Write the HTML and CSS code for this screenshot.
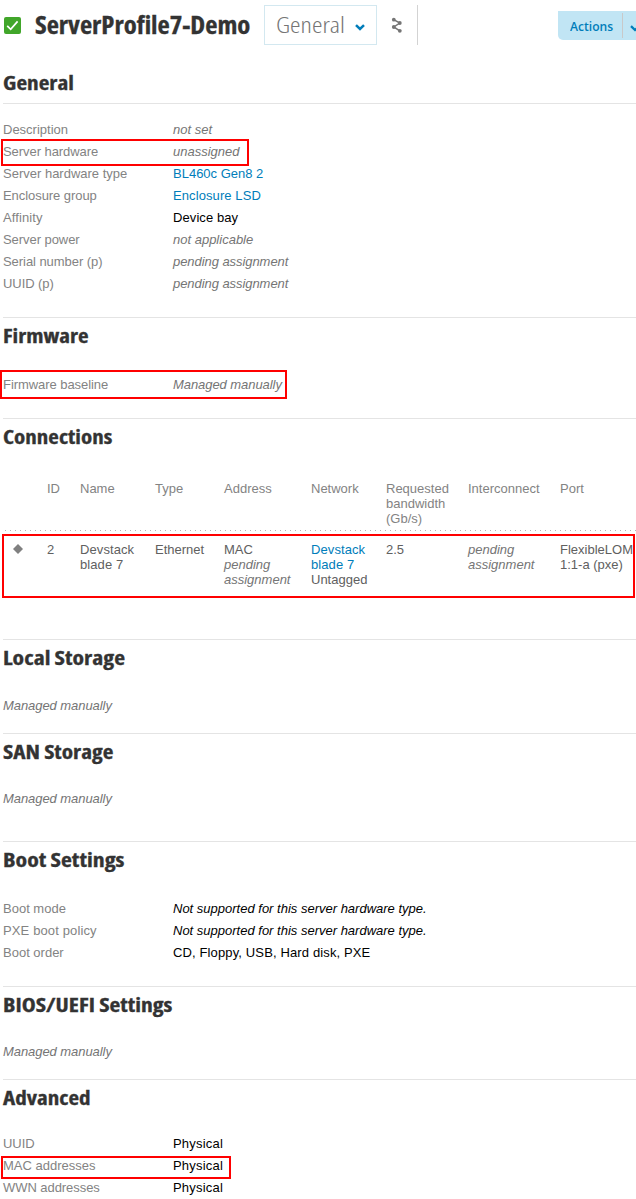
FILE: index.html
```html
<!DOCTYPE html>
<html lang="en">
<head>
<meta charset="utf-8">
<title>ServerProfile7-Demo</title>
<link rel="stylesheet" href="styles.css">
</head>
<body>
<header class="header">
  <svg class="status" viewBox="0 0 17 17"><rect width="17" height="17" rx="2" fill="#41a62a"/><path d="M3.2 8.8 6.7 12.3 13.6 4.4" fill="none" stroke="#fff" stroke-width="1.7"/></svg>
  <h1 class="title"><span class="fit fit-title">ServerProfile7-Demo</span></h1>
  <div class="view"><span class="view-name"><span class="fit fit-view">General</span></span>
    <svg class="chevron" viewBox="0 0 10 7"><path d="M1 1.2 5 5 9 1.2" fill="none" stroke="#007dba" stroke-width="2.5"/></svg>
  </div>
  <div class="share"><svg width="12" height="17" viewBox="0 0 12 17"><path d="M2.8 2.7 8.8 6 2.8 10 8.8 13.8" fill="none" stroke="#757575" stroke-width="1.5"/><g fill="#757575"><circle cx="2.8" cy="2.7" r="1.9"/><circle cx="8.8" cy="6" r="1.9"/><circle cx="2.8" cy="10" r="1.9"/><circle cx="8.8" cy="13.8" r="1.9"/></g></svg></div>
  <div class="actions"><span class="actions-label"><span class="fit fit-actions">Actions</span></span><span class="actions-more"><svg width="10" height="7" viewBox="0 0 10 7"><path d="M1 1.2 5 5 9 1.2" fill="none" stroke="#007dba" stroke-width="2.3"/></svg></span></div>
</header>
<main class="main">
  <section class="section general">
    <h2><span class="fit f-general">General</span></h2>
    <dl class="rows">
      <dt>Description</dt><dd class="unset">not set</dd>
      <dt class="tight">Server hardware</dt><dd class="unset">unassigned</dd>
      <dt>Server hardware type</dt><dd class="link">BL460c Gen8 2</dd>
      <dt class="tight">Enclosure group</dt><dd class="link loose">Enclosure LSD</dd>
      <dt class="loose">Affinity</dt><dd class="loose">Device bay</dd>
      <dt class="tight">Server power</dt><dd class="unset">not applicable</dd>
      <dt class="tight">Serial number (p)</dt><dd class="unset tight">pending assignment</dd>
      <dt class="tight">UUID (p)</dt><dd class="unset tight">pending assignment</dd>
    </dl>
    <div class="mark mark-hardware"></div>
  </section>
  <section class="section firmware">
    <h2><span class="fit f-firmware">Firmware</span></h2>
    <dl class="rows"><dt class="tight">Firmware baseline</dt><dd class="unset tight">Managed manually</dd></dl>
    <div class="mark mark-firmware"></div>
  </section>
  <section class="section connections">
    <h2><span class="fit f-connections">Connections</span></h2>
    <div class="grid grid-head"><span></span><span>ID</span><span>Name</span><span>Type</span><span>Address</span><span>Network</span><span>Requested<br>bandwidth<br>(Gb/s)</span><span>Interconnect</span><span>Port</span></div>
    <svg class="dots" height="1"><line x1="2" y1=".5" x2="640" y2=".5" stroke="#b5b5b5" stroke-dasharray="1 4"/></svg>
    <div class="grid grid-row"><span><svg class="diamond" viewBox="0 0 10 10"><path d="M5 0 10 5 5 10 0 5Z" fill="#808080"/></svg></span><span>2</span><span class="loose">Devstack<br>blade 7</span><span>Ethernet</span><span>MAC<br><i>pending<br>assignment</i></span><span><b class="link loose">Devstack<br>blade 7</b><br>Untagged</span><span>2.5</span><span><i>pending<br>assignment</i></span><span>FlexibleLOM<br>1:1-a (pxe)</span></div>
    <div class="mark mark-connection"></div>
  </section>
  <section class="section local">
    <h2><span class="fit f-local">Local Storage</span></h2>
    <p class="unset tight">Managed manually</p>
  </section>
  <section class="section san">
    <h2><span class="fit f-san">SAN Storage</span></h2>
    <p class="unset tight">Managed manually</p>
  </section>
  <section class="section boot">
    <h2><span class="fit f-boot">Boot Settings</span></h2>
    <dl class="rows">
      <dt>Boot mode</dt><dd><i>Not supported for this server hardware type.</i></dd>
      <dt class="looser">PXE boot policy</dt><dd><i>Not supported for this server hardware type.</i></dd>
      <dt>Boot order</dt><dd class="looser">CD, Floppy, USB, Hard disk, PXE</dd>
    </dl>
  </section>
  <section class="section bios">
    <h2><span class="fit f-bios">BIOS/UEFI Settings</span></h2>
    <p class="unset tight">Managed manually</p>
  </section>
  <section class="section advanced">
    <h2><span class="fit f-advanced">Advanced</span></h2>
    <dl class="rows"><dt class="tight">UUID</dt><dd class="physical">Physical</dd><dt>MAC addresses</dt><dd class="physical">Physical</dd><dt class="tight">WWN addresses</dt><dd class="physical">Physical</dd></dl>
    <div class="mark mark-mac"></div>
  </section>
</main>
</body>
</html>
```
FILE: styles.css
```css
* { box-sizing: border-box; }
html, body { margin: 0; height: 1199px; overflow: hidden; background: #fff; }
body { font: 13px/15px "Liberation Sans", Arial, sans-serif; color: #000; }
h1, h2, p, dl, dd { margin: 0; }
.header { display: flex; height: 65px; padding: 5px 0 0 4px; align-items: flex-start; }
.status { width: 17px; height: 17px; margin-top: 12px; flex: none; }
.title { width: 229px; margin-left: 14px; font: 700 24px/39px "Open Sans", sans-serif; font-stretch: 75%; color: #333; white-space: nowrap; -webkit-text-stroke: .3px #333; }
.fit { display: inline-block; transform-origin: 0 50%; white-space: nowrap; }
.fit-title { transform: scaleX(1.11); }
.fit-view { transform: scaleX(1.21); }
.fit-actions { transform: scaleX(.93); }
.f-general { transform: scaleX(1.165); }
.f-firmware { transform: scaleX(1.155); }
.f-connections { transform: scaleX(1.15); }
.f-local { transform: scaleX(1.185); }
.f-san { transform: scaleX(1.165); }
.f-boot { transform: scaleX(1.19); }
.f-bios { transform: scaleX(1.18); }
.f-advanced { transform: scaleX(1.155); }
.view { display: flex; align-items: center; width: 113px; height: 40px; border: 1px solid #d3e8f0; flex: none; }
.view-name { width: 70px; margin-left: 11px; font: 300 22px/36px "Open Sans", sans-serif; font-stretch: 75%; color: #757575; height: 38px; }
.chevron { width: 10px; height: 7px; margin: 4px 0 0 9px; }
.share { display: flex; width: 41px; height: 40px; padding: 12px 0 0 14px; border-right: 1px solid #d3d3d3; flex: none; }
.actions { display: flex; width: 90px; height: 29px; margin: 6px -12px 0 140px; background: #c1e5f4; border-radius: 0 0 0 5px; color: #007dba; flex: none; }
.actions-label { width: 65px; height: 25px; margin-top: 2px; padding-left: 12px; border-right: 1px solid #c9c9c9; font: 600 13px/27px "Open Sans", sans-serif; }
.actions-more { padding: 9px 0 0 7px; }
.main { padding-left: 3px; }
.section { position: relative; border-top: 1px solid #e4e4e4; }
h2 { height: 38px; font: 700 20px/35px "Open Sans", sans-serif; font-stretch: 75%; color: #333; -webkit-text-stroke: .3px #333; }
.general { height: 252px; border-top: 0; }
.general h2 { height: 39px; border-bottom: 1px solid #e4e4e4; }
.firmware { height: 101px; }
.connections { height: 221px; }
.local { height: 94px; }
.san { height: 108px; }
.boot { height: 145px; }
.bios { height: 93px; }
.advanced { height: 120px; }
.rows { display: grid; grid-template-columns: 170px 1fr; grid-auto-rows: 22px; line-height: 22px; padding-top: 18px; color: #000; }
.general .rows, .advanced .rows { padding-top: 15px; }
dt { color: #838383; }
.unset { color: #757575; font-style: italic; }
.link { color: #007dba; font-weight: 400; }
.tight { letter-spacing: -.06px; }
.loose { letter-spacing: .09px; }
.looser { letter-spacing: .13px; }
.physical { letter-spacing: .2px; }
p { line-height: 22px; padding-top: 17px; }
.san p, .bios p { padding-top: 16px; }
.grid { display: grid; grid-template-columns: 44px 33px 75px 69px 87px 75px 82px 92px 76px; color: #606060; }
.grid-head { padding-top: 24px; height: 73px; color: #838383; }
.dots { display: block; width: 100%; }
.grid-row { padding-top: 11px; }
.diamond { display: block; width: 10px; height: 10px; margin: 2px 0 0 10px; }
.grid i { color: #757575; }
.mark { position: absolute; border: 2px solid #f00; }
.mark-hardware { left: -2px; top: 74px; width: 248px; height: 27px; }
.mark-firmware { left: -3px; top: 52px; width: 287px; height: 29px; }
.mark-connection { left: -1px; top: 115px; width: 633px; height: 64px; }
.mark-mac { left: -2px; top: 76px; width: 230px; height: 23px; }
```
